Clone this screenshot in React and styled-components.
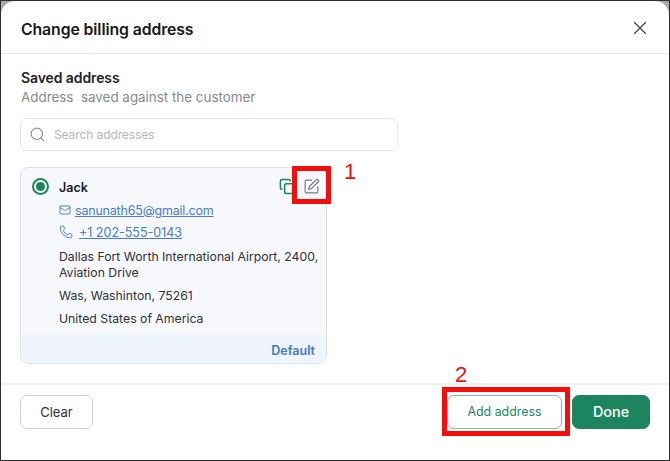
import React from 'react'
import styled, { createGlobalStyle } from 'styled-components'
import { Search, X, Mail, Phone, Copy, SquarePen } from 'lucide-react'

const Global = createGlobalStyle`
html, body {
  margin: 0;
  padding: 0;
  background: #fff;
}
* {
  box-sizing: border-box;
}
`

const Frame = styled.div`
position: relative;
width: 670px;
height: 461px;
overflow: hidden;
background: #a9a9a9;
border: 1px solid #2e2e2e;
font-family: Inter, "Liberation Sans", sans-serif;
`

const Modal = styled.div`
height: 100%;
display: flex;
flex-direction: column;
background: #fff;
border-radius: 14px 14px 0 0;
`

const Header = styled.header`
height: 53px;
flex: none;
display: flex;
align-items: center;
justify-content: space-between;
padding: 4px 18px 0 20px;
border-bottom: 1px solid #e9e9ea;
`

const Title = styled.h1`
margin: 0;
font-size: 15.8px;
font-weight: 600;
letter-spacing: -0.1px;
color: #17181a;
`

const CloseButton = styled.button`
display: flex;
margin-top: -2px;
padding: 0;
border: none;
background: none;
color: #4a4c50;
`

const Body = styled.main`
flex: 1;
padding: 15px 19px 0;
`

const SectionTitle = styled.h2`
margin: 0 0 0 1px;
font-size: 14px;
line-height: 18px;
font-weight: 600;
letter-spacing: -0.1px;
color: #222326;
`

const SectionNote = styled.p`
margin: 1px 0 0 1px;
font-size: 13.4px;
line-height: 18px;
color: #87898d;
`

const SearchBox = styled.div`
width: 378px;
height: 33px;
margin-top: 12px;
display: flex;
align-items: center;
gap: 8px;
padding-left: 8px;
border: 1px solid #e8e8ea;
border-radius: 7px;
color: #8c8e92;
`

const SearchText = styled.span`
font-size: 12px;
letter-spacing: -0.1px;
color: #b5b6b9;
`

const Card = styled.section`
width: 307px;
height: 197px;
margin-top: 16px;
display: flex;
flex-direction: column;
border: 1px solid #dfe1e6;
border-radius: 8px;
background: #f6f8fb;
overflow: hidden;
`

const CardBody = styled.div`
flex: 1;
padding: 9px 8px 0 11px;
`

const NameRow = styled.div`
display: flex;
align-items: center;
height: 18px;
`

const Radio = styled.span`
width: 17px;
height: 17px;
margin-right: 10px;
flex: none;
display: flex;
align-items: center;
justify-content: center;
border: 2px solid #1c8560;
border-radius: 50%;
&::after {
  content: "";
  width: 9px;
  height: 9px;
  border-radius: 50%;
  background: #1c8560;
}
`

const Name = styled.span`
flex: 1;
padding-top: 2px;
font-size: 12.5px;
font-weight: 600;
color: #17181a;
`

const CardActions = styled.div`
display: flex;
align-items: center;
gap: 7px;
margin-right: -2px;
`

const Contact = styled.a`
display: flex;
align-items: center;
gap: ${props => props.$gap}px;
height: 22px;
margin: ${props => props.$top}px 0 0 27px;
font-size: 12.5px;
letter-spacing: ${props => props.$spacing}px;
color: #4a7cc9;
text-decoration: underline;
`

const Address = styled.p`
margin: ${props => props.$top}px -6px 0 27px;
font-size: 12.25px;
line-height: 16px;
color: #303236;
`

const CardFooter = styled.div`
height: 28px;
flex: none;
display: flex;
align-items: center;
justify-content: flex-end;
padding: 2px 11px 0 0;
background: #eff5fd;
font-size: 12.5px;
font-weight: 600;
color: #4478c4;
`

const Footer = styled.footer`
height: 77px;
flex: none;
display: flex;
justify-content: space-between;
padding: 10px 19px 0 19px;
border-top: 2px solid #efeff0;
`

const Actions = styled.div`
display: flex;
gap: 10px;
`

const Button = styled.button`
width: ${props => props.$width}px;
height: 34px;
padding: 0 0 1px;
border-radius: 7px;
font-family: inherit;
font-size: ${props => props.$size}px;
font-weight: ${props => props.$weight};
border: 1px solid ${props => props.$border};
background: ${props => props.$bg};
color: ${props => props.$color};
`

const Marker = styled.div`
position: absolute;
left: ${props => props.$x}px;
top: ${props => props.$y}px;
width: ${props => props.$w}px;
height: ${props => props.$h}px;
border: 5px solid #f40d0d;
`

const MarkerNumber = styled.span`
position: absolute;
left: ${props => props.$x}px;
top: ${props => props.$y}px;
font-family: "Liberation Sans", sans-serif;
font-size: 22px;
line-height: 24px;
color: #f40d0d;
`

export default function App() {
    return (
        <Frame>
            <Global />
            <Modal>
                <Header>
                    <Title>Change billing address</Title>
                    <CloseButton><X size={22} strokeWidth={1.5} /></CloseButton>
                </Header>
                <Body>
                    <SectionTitle>Saved address</SectionTitle>
                    <SectionNote>Address&nbsp; saved against the customer</SectionNote>
                    <SearchBox>
                        <Search size={17} strokeWidth={1.6} />
                        <SearchText>Search addresses</SearchText>
                    </SearchBox>
                    <Card>
                        <CardBody>
                            <NameRow>
                                <Radio />
                                <Name>Jack</Name>
                                <CardActions>
                                    <Copy size={17} strokeWidth={2.2} color="#1c8560" />
                                    <SquarePen size={17} strokeWidth={1.6} color="#77797d" />
                                </CardActions>
                            </NameRow>
                            <Contact $gap={4} $top={4} $spacing={-0.2}>
                                <Mail size={12} strokeWidth={1.8} />
                                sanunath65@gmail.com
                            </Contact>
                            <Contact $gap={6} $top={0} $spacing={0}>
                                <Phone size={14} strokeWidth={1.6} />
                                +1 202-555-0143
                            </Contact>
                            <Address $top={6}>Dallas Fort Worth International Airport, 2400, Aviation Drive</Address>
                            <Address $top={7}>Was, Washinton, 75261</Address>
                            <Address $top={7}>United States of America</Address>
                        </CardBody>
                        <CardFooter>Default</CardFooter>
                    </Card>
                </Body>
                <Footer>
                    <Button $width={73} $size={13} $weight={400} $border="#cfd1d8" $bg="#fff" $color="#303236">Clear</Button>
                    <Actions>
                        <Button $width={115} $size={12.4} $weight={400} $border="#7fb9a3" $bg="#fff" $color="#1c8560">Add address</Button>
                        <Button $width={78} $size={14.4} $weight={500} $border="#1c8560" $bg="#1c8560" $color="#fff">Done</Button>
                    </Actions>
                </Footer>
            </Modal>
            <Marker $x={291} $y={165} $w={39} $h={38} />
            <MarkerNumber $x={343} $y={159}>1</MarkerNumber>
            <Marker $x={441} $y={386} $w={128} $h={49} />
            <MarkerNumber $x={454} $y={362}>2</MarkerNumber>
        </Frame>
    )
}
